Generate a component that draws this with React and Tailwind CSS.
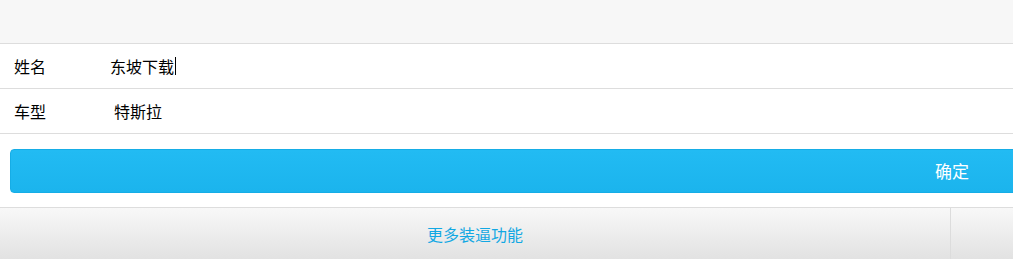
import React from 'react';

const font = { fontFamily: '"Noto Sans CJK SC", "Liberation Sans", sans-serif' };

function FieldRow({ label, value, valueClass, caret }) {
    return (
        <div className="flex h-[45px] items-center border-b border-[#dddddd] bg-white text-[16px] text-black">
            <span className="w-[110px] pl-[14px]">{label}</span>
            <span className={`flex items-center ${valueClass}`}>
                {value}
                {caret && <span className="ml-px inline-block h-[18px] w-px bg-black" />}
            </span>
        </div>
    );
}

export default function App() {
    return (
        <div className="h-[259px] w-[1013px] overflow-hidden bg-white" style={font}>
            <div className="w-[1904px]">
                <div className="h-[44px] border-b border-[#dddddd] bg-[#f7f7f7]" />
                <FieldRow label="姓名" value="东坡下载" valueClass="" caret />
                <FieldRow label="车型" value="特斯拉" valueClass="pl-[4px]" />
                <div className="px-[10px] pt-[15px] pb-[14px]">
                    <button className="flex h-[44px] w-full items-center justify-center rounded-[4px] border border-[#16ade6] bg-gradient-to-b from-[#22bbf3] to-[#1bb4ed] text-[17px] text-white">
                        确定
                    </button>
                </div>
                <div className="flex h-[52px] border-t border-[#dddddd] bg-gradient-to-b from-[#f8f8f8] to-[#e2e2e2]">
                    <div className="flex w-[951px] items-center justify-center border-r border-[#dcdcdc] text-[16px] text-[#12a8e3]">
                        更多装逼功能
                    </div>
                    <div className="flex-1" />
                </div>
            </div>
        </div>
    );
}
